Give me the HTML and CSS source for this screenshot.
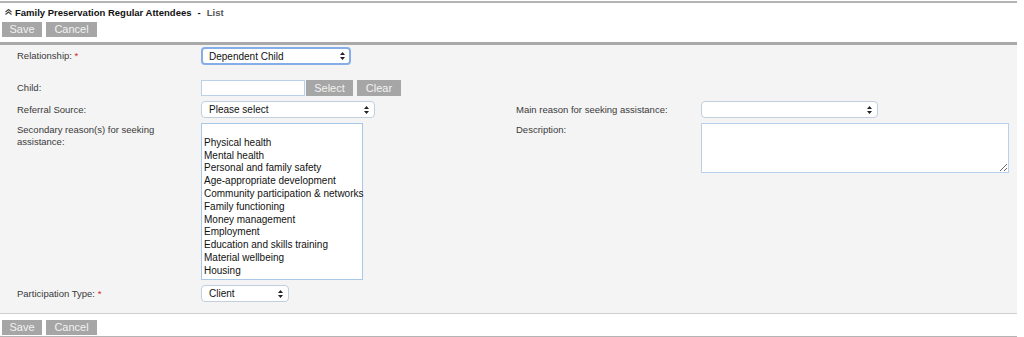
FILE: index.html
```html
<!DOCTYPE html>
<html lang="en">
<head>
  <meta charset="UTF-8" />
  <title>Family Preservation Regular Attendees</title>
  <link rel="stylesheet" href="styles.css">
</head>
<body>

<div class="page">
  <div class="page-head">
    <div class="title">
      <svg class="collapse" width="7" height="6" viewBox="0 0 7 6">
        <path d="M0.5 3 L3.5 0.5 L6.5 3 M0.5 5.5 L3.5 3 L6.5 5.5" fill="none" stroke="#444" stroke-width="1.1"/>
      </svg>
      <span>Family Preservation Regular Attendees</span>
      <span class="dash">-</span>
      <span class="crumb">List</span>
    </div>
    <div class="actions">
      <button class="btn">Save</button>
      <button class="btn btn-wide">Cancel</button>
    </div>
  </div>

  <div class="form">
    <div class="row row-first">
      <div class="cell">
        <label class="lbl">Relationship: <span class="req">*</span></label>
        <div class="select select-focus w-150"><span>Dependent Child</span><svg class="arrows" width="5" height="8" viewBox="0 0 5 8"><path d="M2.5 0 L5 3 L0 3 Z M2.5 8 L5 5 L0 5 Z" fill="#222"/></svg></div>
      </div>
    </div>

    <div class="row row-child">
      <div class="cell">
        <label class="lbl">Child:</label>
        <div class="picker">
          <input class="text" type="text">
          <button class="btn btn-pick">Select</button>
          <button class="btn btn-clear">Clear</button>
        </div>
      </div>
    </div>

    <div class="row">
      <div class="cell">
        <label class="lbl">Referral Source:</label>
        <div class="select w-174"><span>Please select</span><svg class="arrows" width="5" height="8" viewBox="0 0 5 8"><path d="M2.5 0 L5 3 L0 3 Z M2.5 8 L5 5 L0 5 Z" fill="#222"/></svg></div>
      </div>
      <div class="cell">
        <label class="lbl">Main reason for seeking assistance:</label>
        <div class="select w-177"><span></span><svg class="arrows" width="5" height="8" viewBox="0 0 5 8"><path d="M2.5 0 L5 3 L0 3 Z M2.5 8 L5 5 L0 5 Z" fill="#222"/></svg></div>
      </div>
    </div>

    <div class="row row-tall">
      <div class="cell">
        <label class="lbl lbl-top">Secondary reason(s) for seeking assistance:</label>
        <div class="listbox">
          <div class="opt">&nbsp;</div>
          <div class="opt">Physical health</div>
          <div class="opt">Mental health</div>
          <div class="opt">Personal and family safety</div>
          <div class="opt">Age-appropriate development</div>
          <div class="opt">Community participation &amp; networks</div>
          <div class="opt">Family functioning</div>
          <div class="opt">Money management</div>
          <div class="opt">Employment</div>
          <div class="opt">Education and skills training</div>
          <div class="opt">Material wellbeing</div>
          <div class="opt">Housing</div>
        </div>
      </div>
      <div class="cell">
        <label class="lbl lbl-top">Description:</label>
        <textarea class="area"></textarea>
      </div>
    </div>

    <div class="row">
      <div class="cell">
        <label class="lbl">Participation Type: <span class="req">*</span></label>
        <div class="select w-88"><span>Client</span><svg class="arrows" width="5" height="8" viewBox="0 0 5 8"><path d="M2.5 0 L5 3 L0 3 Z M2.5 8 L5 5 L0 5 Z" fill="#222"/></svg></div>
      </div>
    </div>
  </div>

  <div class="page-foot">
    <div class="actions">
      <button class="btn">Save</button>
      <button class="btn btn-wide">Cancel</button>
    </div>
  </div>
</div>

</body>
</html>
```

FILE: styles.css
```css
body {
  margin: 0;
  background: #fff;
  font-family: 'Liberation Sans', Arial, sans-serif;
  font-size: 10px;
  color: #3a3a3a;
}

.page {
  width: 1017px;
  padding-top: 1px;
}

.page-head {
  border-top: 2px solid #b4b4b4;
  border-bottom: 3px solid #a9a9a9;
  padding-bottom: 5px;
}

.title {
  display: flex;
  align-items: center;
  gap: 3px;
  height: 16px;
  margin-top: 1px;
  padding-left: 5px;
  font-size: 9.5px;
  font-weight: bold;
  color: #111;
}

.title .dash {
  margin: 0 3px;
}

.title .crumb {
  color: #555;
}

.actions {
  display: flex;
  gap: 4px;
  padding-left: 2px;
  margin-top: 2px;
}

.btn {
  height: 15px;
  width: 40px;
  padding: 0;
  border: none;
  background: #a6a6a6;
  color: #f2f2f2;
  font-family: 'Liberation Sans', Arial, sans-serif;
  font-size: 11px;
  line-height: 15px;
}

.btn-wide {
  width: 51px;
}

.form {
  background: #f4f4f4;
  border-bottom: 1px solid #cfcfcf;
  padding: 2px 0 11px;
}

.row {
  display: flex;
  margin-top: 5px;
}

.row-first {
  margin-top: 0;
}

.row-child {
  margin-top: 15px;
}

.cell {
  display: flex;
  align-items: center;
}

.cell:first-child {
  width: 499px;
  padding-left: 17px;
}

.row-tall .cell {
  align-items: flex-start;
}

.lbl {
  width: 184px;
  font-size: 9.5px;
  line-height: 12px;
}

.cell:nth-child(2) .lbl {
  width: 185px;
}

.lbl-top {
  width: 160px;
  padding-top: 1px;
  padding-right: 24px;
}

.cell:nth-child(2) .lbl-top {
  width: 185px;
  padding-right: 0;
}

.req {
  color: #d9262a;
}

.select {
  display: flex;
  align-items: center;
  justify-content: space-between;
  box-sizing: border-box;
  height: 17px;
  padding: 0 5px 0 7px;
  background: #fff;
  border: 1px solid #c3cfdc;
  border-radius: 4px;
  color: #111;
}

.select-focus {
  height: 18px;
  border: 2px solid #86aee6;
  padding-left: 6px;
  padding-right: 4px;
}

.w-150 { width: 150px; }
.w-174 { width: 174px; }
.w-177 { width: 177px; }
.w-88 { width: 88px; }

.picker {
  display: flex;
  gap: 3px;
}

.text {
  box-sizing: border-box;
  width: 104px;
  height: 16px;
  margin: 0;
  border: 1px solid #b9d0ea;
  background: #fff;
}

.btn-pick {
  width: 47px;
  height: 16px;
  margin-left: -2px;
}

.btn-clear {
  width: 44px;
  height: 16px;
  margin-left: 1px;
}

.listbox {
  box-sizing: border-box;
  width: 162px;
  height: 157px;
  padding: 0 0 0 2px;
  background: #fff;
  border: 1px solid #a9c7e6;
  color: #111;
}

.opt {
  line-height: 12.8px;
  white-space: nowrap;
}

.area {
  box-sizing: border-box;
  width: 308px;
  height: 50px;
  margin: 0;
  border: 1px solid #b9d0e8;
  background: #fff;
  resize: both;
}

.page-foot {
  padding-top: 4px;
  padding-bottom: 1px;
  border-bottom: 2px solid #b4b4b4;
}
```
